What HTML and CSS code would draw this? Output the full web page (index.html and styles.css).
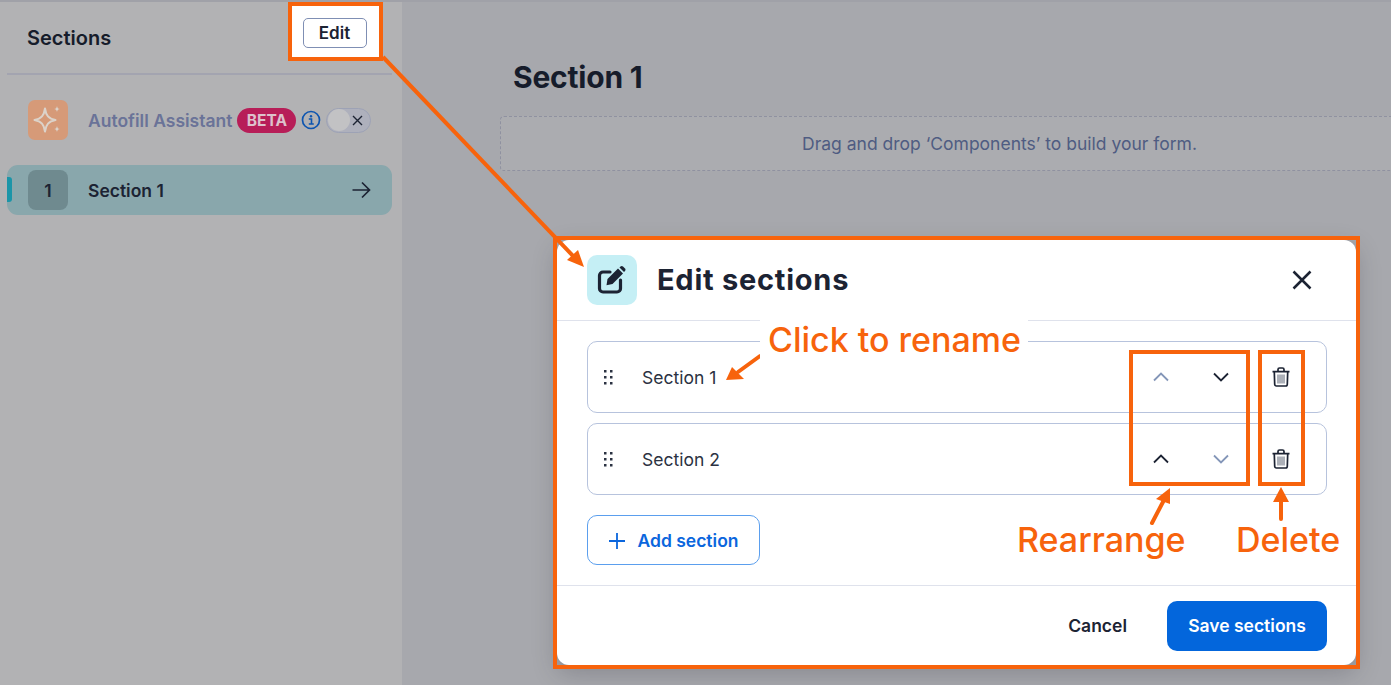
FILE: index.html
```html
<!DOCTYPE html>
<html lang="en">
<head>
<meta charset="utf-8">
<title>Edit sections</title>
<link rel="stylesheet" href="styles.css">
</head>
<body>
<div class="app">
  <aside class="sidebar">
    <div class="side-head">
      <h2 class="side-title">Sections</h2>
      <div class="edit-frame"><button class="edit-btn">Edit</button></div>
    </div>
    <div class="auto-row">
      <span class="auto-icon">
        <svg width="40" height="40" viewBox="0 0 40 40"><path d="M17 8.500c1 7 3.500 10 10.500 11.500-7 1.500-9.500 4.500-10.500 11.500-1-7-3.500-10-10.500-11.500 7-1.500 9.500-4.500 10.500-11.500z" fill="none" stroke="#dcd3ca" stroke-width="2" stroke-linejoin="round"/><path d="M29 6c.4 2 1 2.700 3 3-2 .4-2.600 1-3 3-.4-2-1-2.600-3-3 2-.3 2.600-1 3-3zM29 26c.4 2 1 2.700 3 3-2 .4-2.600 1-3 3-.4-2-1-2.600-3-3 2-.3 2.600-1 3-3z" fill="#dcd3ca"/></svg>
      </span>
      <span class="auto-label">Autofill Assistant</span>
      <span class="beta">BETA</span>
      <svg class="info" width="20" height="20" viewBox="0 0 20 20"><circle cx="10" cy="10" r="8.500" fill="none" stroke="#0d55b0" stroke-width="1.700"/><circle cx="10" cy="6.200" r="1.200" fill="#0d55b0"/><path d="M7.800 9h2.700v5M7.800 14h5" fill="none" stroke="#0d55b0" stroke-width="1.600"/></svg>
      <span class="toggle"><span class="knob"></span><svg width="11" height="11" viewBox="0 0 11 11"><path d="M1 1l9 9M10 1l-9 9" stroke="#1c2333" stroke-width="1.400"/></svg></span>
    </div>
    <div class="sec-row">
      <span class="sec-mark"></span>
      <span class="sec-num">1</span>
      <span class="sec-name">Section 1</span>
      <svg width="20" height="18" viewBox="0 0 20 18"><path d="M1.500 9h17M11 1.500L18.500 9 11 16.500" fill="none" stroke="#1c2333" stroke-width="1.700"/></svg>
    </div>
  </aside>
  <main class="main">
    <h1 class="main-title">Section 1</h1>
    <div class="drop">Drag and drop ‘Components’ to build your form.</div>
  </main>
</div>

<section class="modal">
  <header class="m-head">
    <span class="m-icon">
      <svg width="30" height="30" viewBox="0 0 30 30"><path d="M13 7H6A3.500 3.500 0 0 0 2.500 10.500v13A3.500 3.500 0 0 0 6 27h14a3.500 3.500 0 0 0 3.500-3.500V15" fill="none" stroke="#1c2333" stroke-width="3.200" stroke-linecap="round"/><path d="M10.500 14L21 3.500l5 5L15.500 19l-6 1.200z" fill="#1c2333"/><path d="M22.500 2.500L23.500 1.500a1.800 1.800 0 0 1 2.500 0l2 2a1.800 1.800 0 0 1 0 2.500l-1 1z" fill="#1c2333"/></svg>
    </span>
    <h2 class="m-title">Edit sections</h2>
    <svg class="m-close" width="20" height="20" viewBox="0 0 20 20"><path d="M1.500 1.500l17 17M18.500 1.500l-17 17" stroke="#1c2333" stroke-width="2.500"/></svg>
  </header>
  <div class="m-body">
    <div class="row">
      <svg class="grip" width="9" height="15" viewBox="0 0 9 15"><g fill="#2b3242"><rect x="0" y="0" width="2.500" height="2.500"/><rect x="6" y="0" width="2.500" height="2.500"/><rect x="0" y="6" width="2.500" height="2.500"/><rect x="6" y="6" width="2.500" height="2.500"/><rect x="0" y="12" width="2.500" height="2.500"/><rect x="6" y="12" width="2.500" height="2.500"/></g></svg>
      <span class="row-name">Section 1</span>
      <svg class="chev" width="16" height="10" viewBox="0 0 16 10"><path d="M1 8.500L8 1.500l7 7" fill="none" stroke="#8496b8" stroke-width="1.800"/></svg>
      <svg class="chev" width="16" height="10" viewBox="0 0 16 10"><path d="M1 1.500l7 7 7-7" fill="none" stroke="#1c2333" stroke-width="1.800"/></svg>
      <svg class="trash" width="18" height="20" viewBox="0 0 18 20"><path d="M.5 4.700h17M6 4V2.500A1.500 1.500 0 0 1 7.500 1h3A1.500 1.500 0 0 1 12 2.500V4M2.300 5l.4 12.300A1.700 1.700 0 0 0 4.400 19h9.200a1.700 1.700 0 0 0 1.700-1.700L15.700 5" fill="none" stroke="#1c2333" stroke-width="1.700"/><path d="M6 7.500V16.500M8 7.500V16.500M10 7.500V16.500M12 7.500V16.500" stroke="#5a6272" stroke-width="1"/></svg>
    </div>
    <div class="row">
      <svg class="grip" width="9" height="15" viewBox="0 0 9 15"><g fill="#2b3242"><rect x="0" y="0" width="2.500" height="2.500"/><rect x="6" y="0" width="2.500" height="2.500"/><rect x="0" y="6" width="2.500" height="2.500"/><rect x="6" y="6" width="2.500" height="2.500"/><rect x="0" y="12" width="2.500" height="2.500"/><rect x="6" y="12" width="2.500" height="2.500"/></g></svg>
      <span class="row-name">Section 2</span>
      <svg class="chev" width="16" height="10" viewBox="0 0 16 10"><path d="M1 8.500L8 1.500l7 7" fill="none" stroke="#1c2333" stroke-width="1.800"/></svg>
      <svg class="chev" width="16" height="10" viewBox="0 0 16 10"><path d="M1 1.500l7 7 7-7" fill="none" stroke="#8496b8" stroke-width="1.800"/></svg>
      <svg class="trash" width="18" height="20" viewBox="0 0 18 20"><path d="M.5 4.700h17M6 4V2.500A1.500 1.500 0 0 1 7.500 1h3A1.500 1.500 0 0 1 12 2.500V4M2.300 5l.4 12.300A1.700 1.700 0 0 0 4.400 19h9.200a1.700 1.700 0 0 0 1.700-1.700L15.700 5" fill="none" stroke="#1c2333" stroke-width="1.700"/><path d="M6 7.500V16.500M8 7.500V16.500M10 7.500V16.500M12 7.500V16.500" stroke="#5a6272" stroke-width="1"/></svg>
    </div>
    <button class="add-btn"><svg width="16" height="16" viewBox="0 0 16 16"><path d="M8 0v16M0 8h16" stroke="#0b66dd" stroke-width="1.800"/></svg>Add section</button>
  </div>
  <footer class="m-foot">
    <button class="cancel">Cancel</button>
    <button class="save">Save sections</button>
  </footer>
</section>

<div class="frame frame-modal"></div>
<div class="frame frame-move"></div>
<div class="frame frame-del"></div>
<svg class="arrows" width="1391" height="685" viewBox="0 0 1391 685">
  <g fill="none" stroke="#f7630c" stroke-width="4">
    <path d="M383 57L575 258"/>
    <path d="M760 356L738 372" stroke-linecap="round"/>
    <path d="M1152 523L1164 500" stroke-linecap="round"/>
    <path d="M1281 519V498" stroke-linecap="round"/>
  </g>
  <g fill="#f7630c">
    <path d="M584 267L567 260 578 250z"/>
    <path d="M726 380L732 367 744 379z"/>
    <path d="M1170 488L1170 504 1156 499z"/>
    <path d="M1281 487L1289 502H1273z"/>
  </g>
</svg>
<span class="note note-rename">Click to rename</span>
<span class="note note-move">Rearrange</span>
<span class="note note-del">Delete</span>
</body>
</html>
```
FILE: styles.css
```css
* { box-sizing: border-box; }
html, body { margin: 0; height: 685px; overflow: hidden; }
body { font-family: Inter, "Liberation Sans", sans-serif; color: #1c2333; background: #a7a8ad; position: relative; }
button { font-family: inherit; cursor: pointer; }
h1, h2 { margin: 0; }

.app { display: flex; height: 685px; border-top: 2px solid #a0a1a8; }
.sidebar { width: 402px; flex: none; background: #b2b2b4; padding: 0 10px 0 7px; }
.side-head { display: flex; align-items: flex-start; justify-content: space-between; height: 73px; border-bottom: 2px solid #a3a4b0; padding-left: 20px; }
.side-title { font-size: 20px; font-weight: 600; line-height: 24px; margin-top: 24px; color: #161c2b; }
.edit-frame { width: 95px; height: 59px; margin-right: 9px; background: #fff; border: 4px solid #f7630c; display: flex; align-items: center; justify-content: center; }
.edit-btn { width: 64px; height: 30px; margin: 3px 2px 0 0; background: #fff; border: 1px solid #7f8fb4; border-radius: 5px; font-size: 17px; font-weight: 600; color: #1c2333; padding: 0; }

.auto-row { display: flex; align-items: center; height: 40px; margin-top: 25px; padding-left: 21px; }
.auto-icon { width: 40px; height: 40px; border-radius: 7px; background: #d69a78; margin-right: 20px; display: flex; }
.auto-label { font-size: 17.500px; font-weight: 600; color: #6a7398; margin-right: 5px; }
.beta { background: #b71e58; color: #ddc2cc; font-size: 15.500px; font-weight: 700; border-radius: 13px; width: 59px; height: 25px; display: flex; align-items: center; justify-content: center; margin-right: 5px; }
.info { margin-right: 5px; flex: none; }
.toggle { width: 45px; height: 25px; border-radius: 13px; background: #aeb0bc; border: 1px solid #9da2b5; display: flex; align-items: center; justify-content: space-between; padding: 0 7px 0 1px; }
.knob { width: 22px; height: 22px; border-radius: 50%; background: #c2c2c4; }

.sec-row { display: flex; align-items: center; height: 50px; margin-top: 25px; padding: 0 21px; background: #89a7ac; border-radius: 11px; position: relative; }
.sec-mark { position: absolute; left: 0; top: 12px; width: 5px; height: 25px; background: #1b95a8; border-radius: 0 3px 3px 0; }
.sec-num { width: 40px; height: 40px; border-radius: 8px; background: #6f8a8f; font-size: 17.500px; font-weight: 600; display: flex; align-items: center; justify-content: center; margin-right: 20px; }
.sec-name { font-size: 17.500px; font-weight: 600; flex: 1; padding-top: 1px; }

.main { flex: 1; min-width: 0; overflow: hidden; padding: 0 0 0 98px; }
.main-title { font-size: 30px; font-weight: 700; line-height: 40px; margin: 55px 0 19px 13px; letter-spacing: -.2px; color: #161c2b; }
.drop { width: 999px; height: 55px; background: #abacb0; border: 1px dashed #8f91a0; border-radius: 4px; display: flex; align-items: center; justify-content: center; font-size: 17.500px; color: #4f5c82; }

.modal { position: absolute; left: 557px; top: 240px; width: 799px; height: 425px; background: #fff; border-radius: 12px; box-shadow: 0 8px 24px rgba(40,40,50,.25); display: flex; flex-direction: column; }
.m-head { height: 81px; flex: none; border-bottom: 1px solid #dfe2ec; display: flex; align-items: center; padding: 0 44px 0 30px; }
.m-icon { width: 50px; height: 50px; border-radius: 10px; background: #c5eff5; display: flex; align-items: center; justify-content: center; margin-right: 20px; }
.m-title { font-size: 29px; font-weight: 700; letter-spacing: .75px; line-height: 36px; flex: 1; color: #1c2333; }
.m-body { height: 265px; flex: none; padding: 20px 29px 0 30px; display: flex; flex-direction: column; gap: 10px; border-bottom: 1px solid #dfe2ec; }
.row { height: 72px; flex: none; border: 1px solid #b7c3dd; border-radius: 10px; display: flex; align-items: center; padding: 0 36px 0 16px; }
.grip { flex: none; }
.row-name { flex: 1; margin-left: 29px; font-size: 17.500px; color: #2b3242; padding-top: 1px; }
.chev { flex: none; margin-right: 44px; }
.chev + .trash { margin-left: -1px; }
.trash { flex: none; }
.add-btn { width: 173px; height: 50px; flex: none; margin-top: 10px; background: #fff; border: 1px solid #5b9fee; border-radius: 10px; color: #0b66dd; font-size: 17.500px; font-weight: 600; display: flex; align-items: center; justify-content: center; gap: 13px; padding: 1px 0 0; }
.m-foot { flex: 1; display: flex; align-items: flex-start; justify-content: flex-end; padding: 15px 29px 0 0; }
.cancel { height: 50px; background: none; border: 0; font-size: 17.500px; font-weight: 600; color: #1c2333; margin-right: 40px; padding: 0 0 1px; }
.save { width: 160px; height: 50px; background: #0366dc; color: #fff; border: 0; border-radius: 10px; font-size: 17.500px; font-weight: 600; padding: 0 0 1px; }

.frame { position: absolute; border: 4px solid #f7630c; pointer-events: none; }
.frame-modal { left: 553px; top: 236px; width: 807px; height: 433px; }
.frame-move { left: 1129px; top: 350px; width: 121px; height: 136px; }
.frame-del { left: 1258px; top: 350px; width: 47px; height: 136px; }
.arrows { position: absolute; left: 0; top: 0; pointer-events: none; }
.note { position: absolute; font-family: Inter, sans-serif; font-weight: 500; font-size: 34px; line-height: 40px; color: #f7630c; white-space: nowrap; }
.note-rename { left: 760px; top: 320px; padding: 0 7px 0 8px; background: #fff; }
.note-move { left: 1017px; top: 520px; }
.note-del { left: 1236px; top: 520px; }
```
